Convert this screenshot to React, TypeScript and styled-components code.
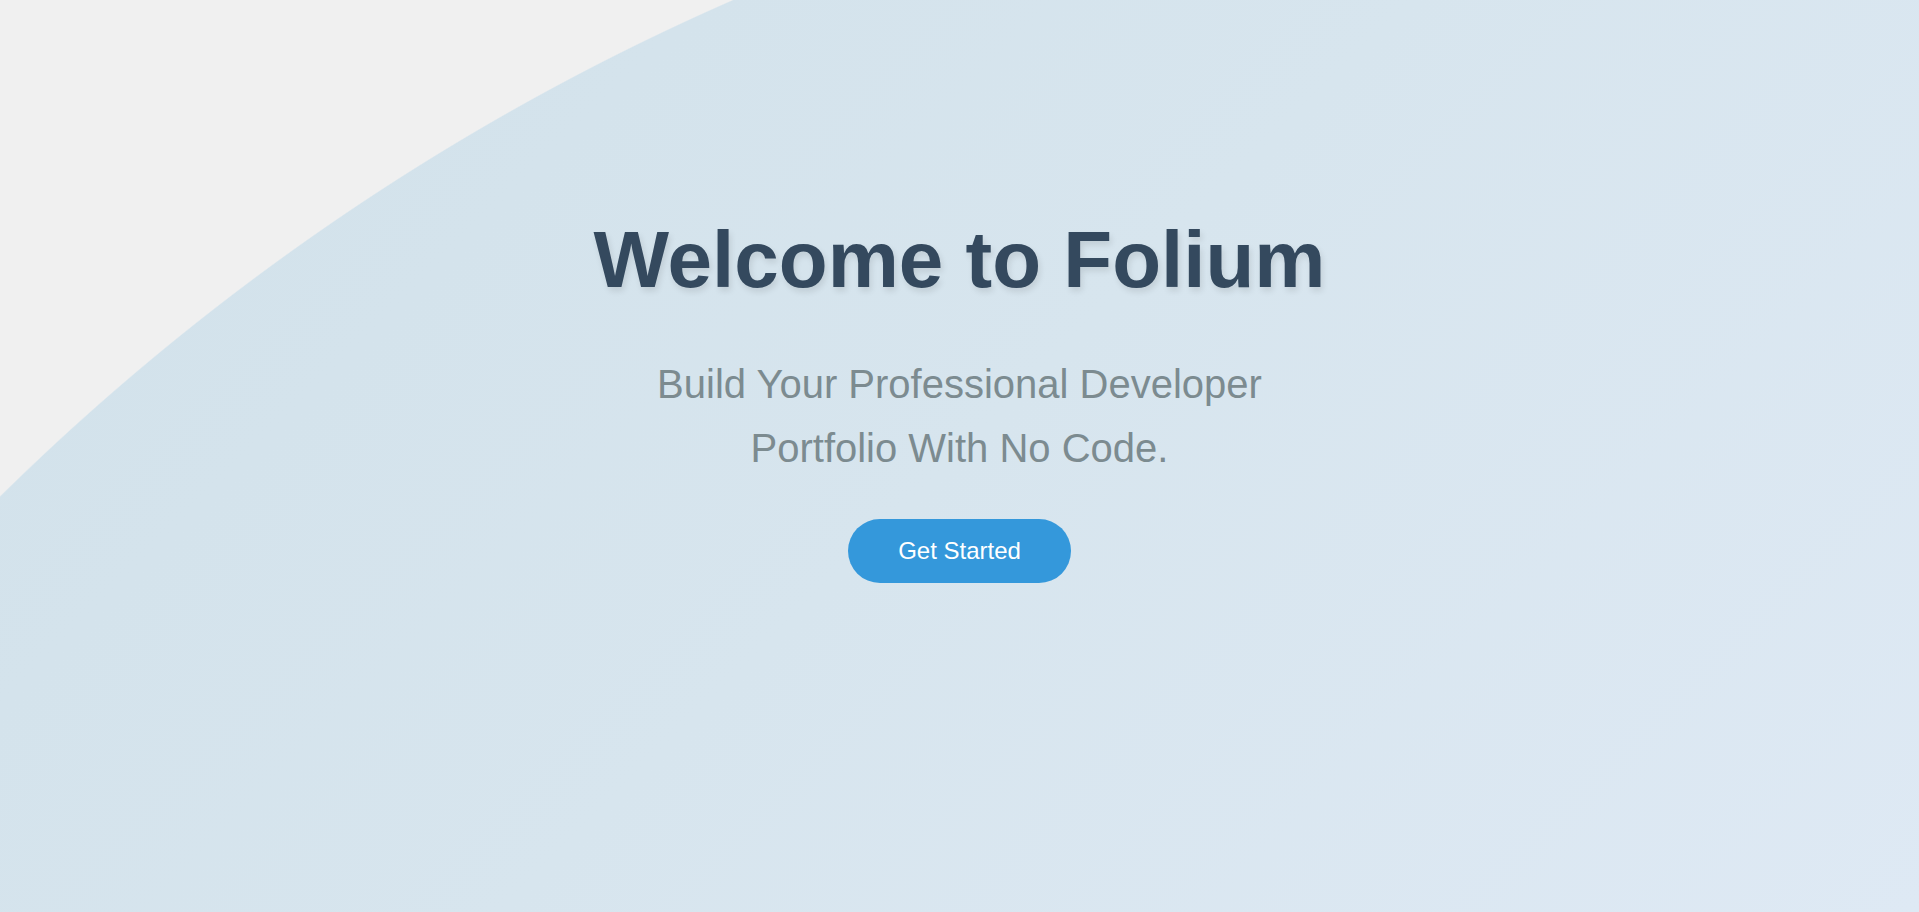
import styled, { createGlobalStyle } from 'styled-components';

const GlobalStyle = createGlobalStyle`
  * {
    box-sizing: border-box;
  }

  html,
  body {
    margin: 0;
    padding: 0;
    font-family: 'Liberation Sans', Arial, sans-serif;
    background: #f0f0f0;
  }
`;

export default function App() {
  return (
    <>
      <GlobalStyle />
      <HeroWrapper>
        <Contents>
          <Heading>Welcome to Folium</Heading>
          <Description>Build Your Professional Developer Portfolio With No Code.</Description>
          <StartButton type="button">Get Started</StartButton>
        </Contents>
      </HeroWrapper>
    </>
  );
}

const HeroWrapper = styled.section`
  min-height: 100vh;
  width: 100%;
  overflow: hidden;
  background:
    radial-gradient(circle 2437px at 1710px 2232px, transparent 99.95%, #f0f0f0 100%),
    linear-gradient(135deg, #d1e1ea 0%, #d7e5ee 50%, #dee9f4 100%);
`;

const Contents = styled.div`
  display: flex;
  flex-direction: column;
  align-items: center;
  text-align: center;
  padding-top: 212px;
`;

const Heading = styled.h1`
  margin: 0 0 44px;
  font-size: 80px;
  font-weight: bold;
  line-height: 1.2;
  color: #34495e;
  text-shadow: 2px 4px 6px rgba(0, 0, 0, 0.1);
`;

const Description = styled.p`
  margin: 0 0 39px;
  max-width: 680px;
  font-size: 40px;
  line-height: 1.6;
  color: #7c8b90;
`;

const StartButton = styled.button`
  padding: 18px 50px;
  border: none;
  border-radius: 50px;
  background: #3498db;
  color: #fff;
  font-family: 'Liberation Sans', Arial, sans-serif;
  font-size: 24px;
  cursor: pointer;
  transition: background 0.3s ease;

  &:hover {
    background: #2980b9;
  }
`;
